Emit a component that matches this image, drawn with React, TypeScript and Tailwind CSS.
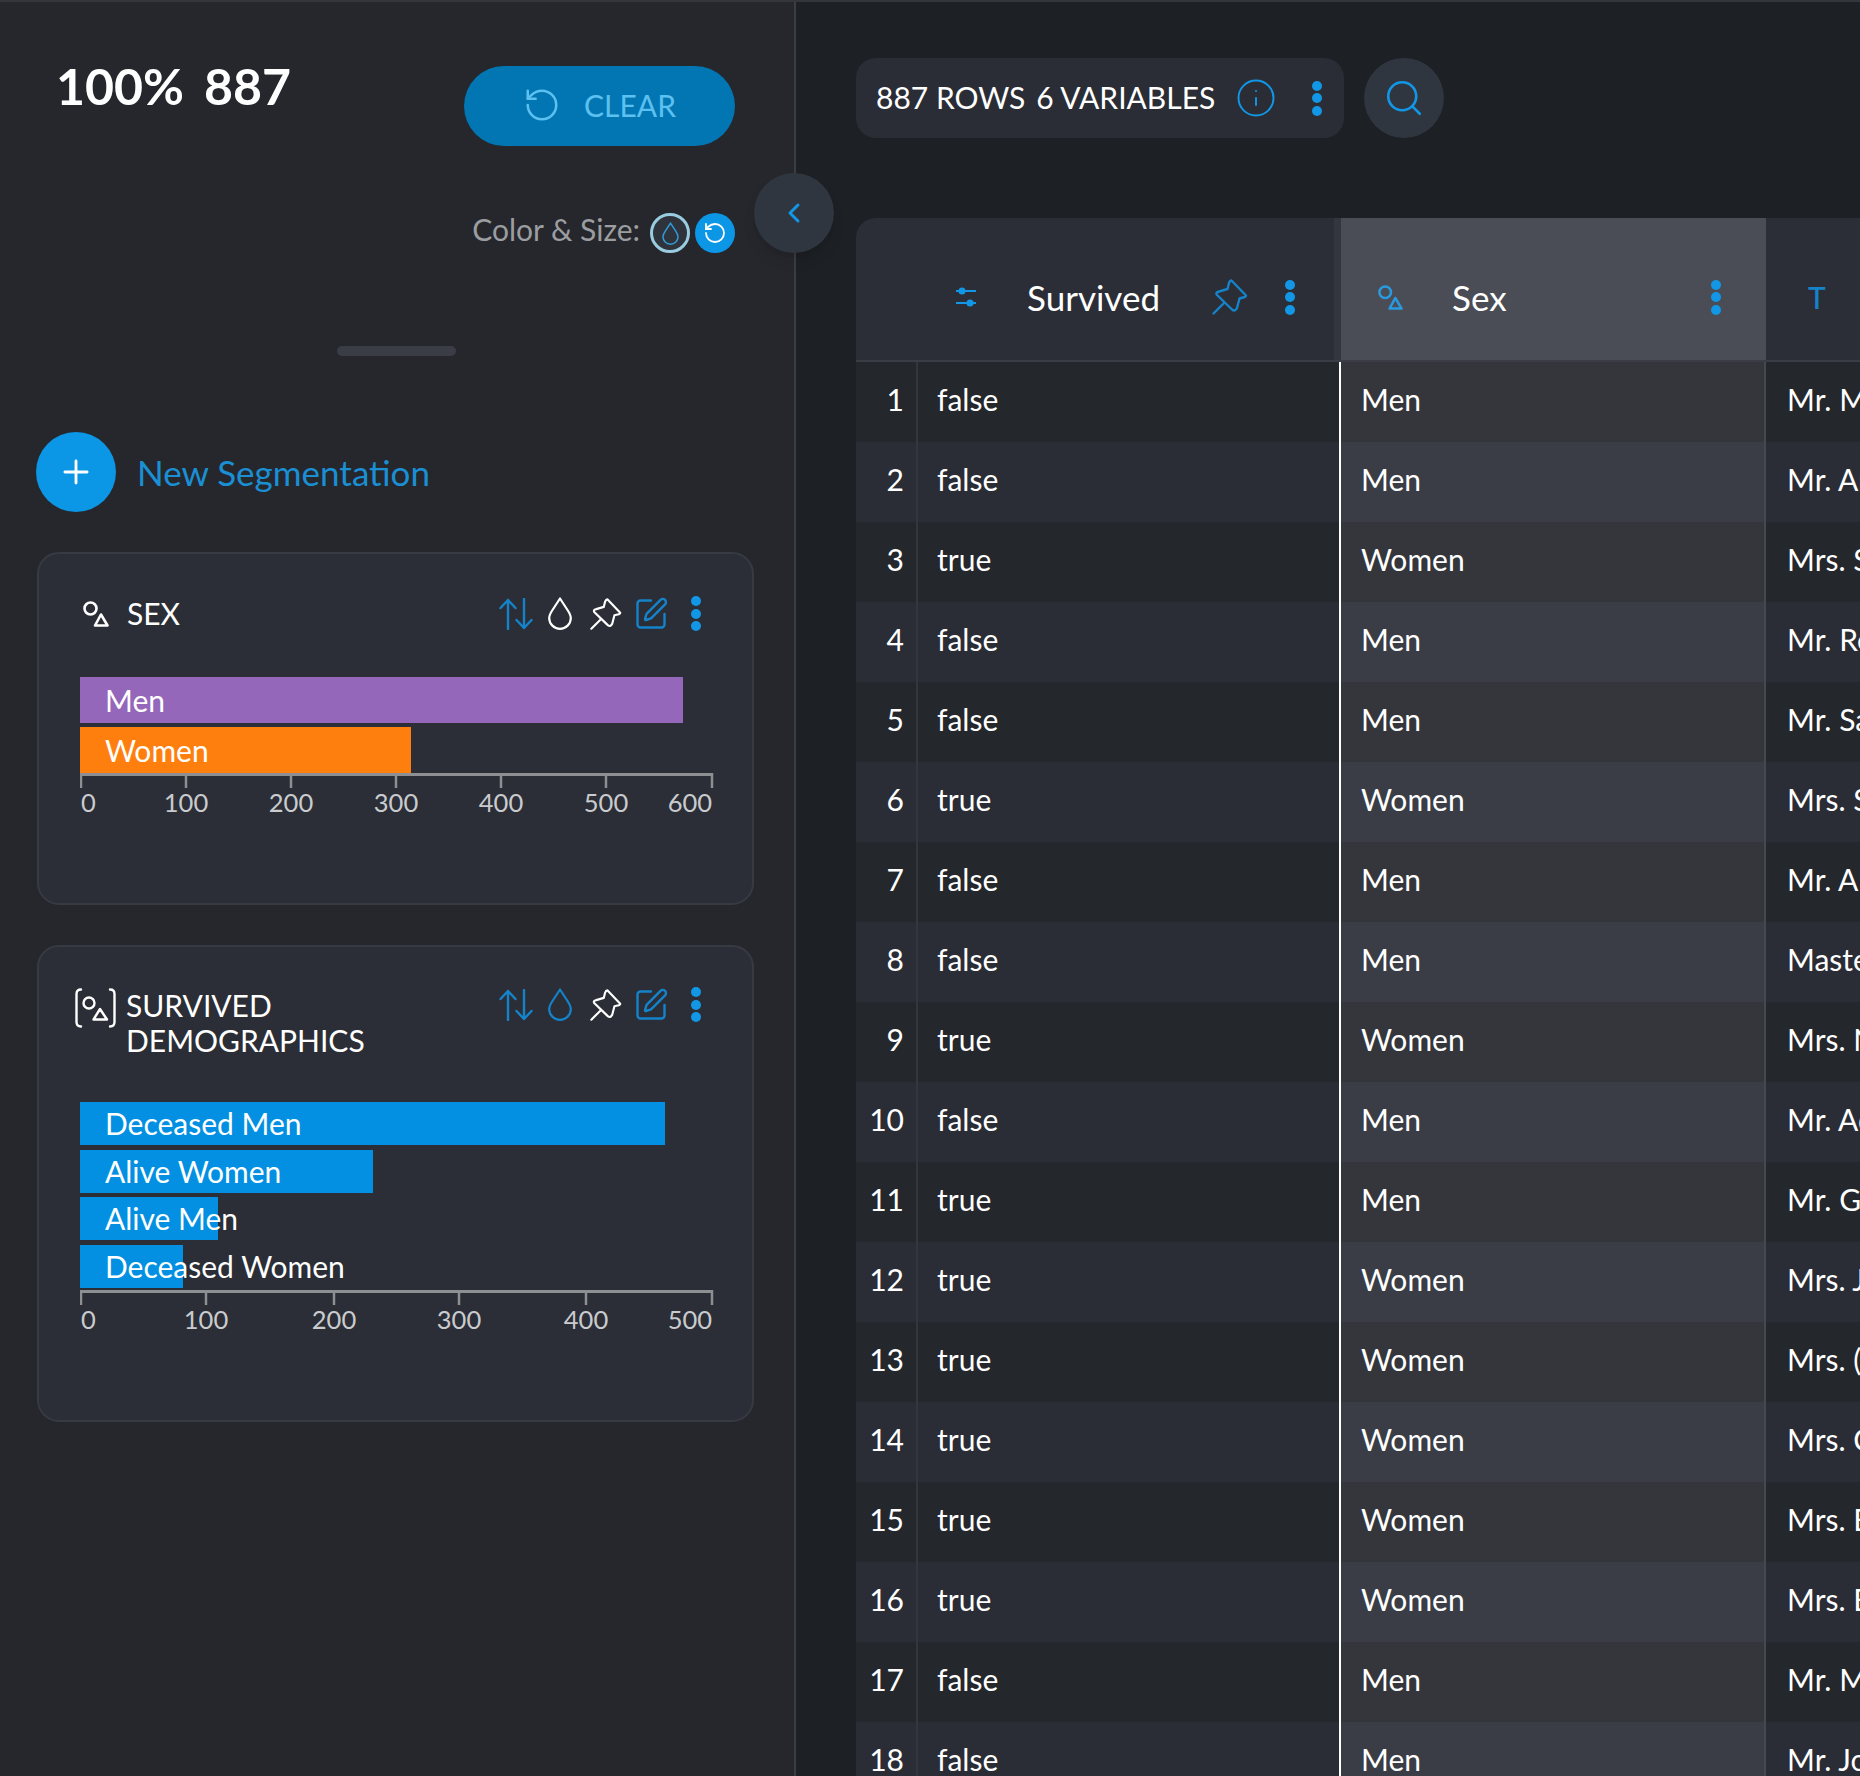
import React from 'react';
import { ChevronLeft, Info, Plus, RotateCcw, Search, SquarePen } from 'lucide-react';

interface Row {
  survived: string;
  sex: string;
  name: string;
}

const rows: Row[] = [
  { survived: 'false', sex: 'Men', name: 'Mr. Mark' },
  { survived: 'false', sex: 'Men', name: 'Mr. Anders' },
  { survived: 'true', sex: 'Women', name: 'Mrs. Sara' },
  { survived: 'false', sex: 'Men', name: 'Mr. Rene' },
  { survived: 'false', sex: 'Men', name: 'Mr. Samuel' },
  { survived: 'true', sex: 'Women', name: 'Mrs. Sinai' },
  { survived: 'false', sex: 'Men', name: 'Mr. Albert' },
  { survived: 'false', sex: 'Men', name: 'Master Harald' },
  { survived: 'true', sex: 'Women', name: 'Mrs. Nora' },
  { survived: 'false', sex: 'Men', name: 'Mr. Adolph' },
  { survived: 'true', sex: 'Men', name: 'Mr. George' },
  { survived: 'true', sex: 'Women', name: 'Mrs. John' },
  { survived: 'true', sex: 'Women', name: 'Mrs. (Alice' },
  { survived: 'true', sex: 'Women', name: 'Mrs. Carol' },
  { survived: 'true', sex: 'Women', name: 'Mrs. Edith' },
  { survived: 'true', sex: 'Women', name: 'Mrs. Emily' },
  { survived: 'false', sex: 'Men', name: 'Mr. Mauritz' },
  { survived: 'false', sex: 'Men', name: 'Mr. Johan' },
];

const Dots = ({ className = '' }: { className?: string }) => (
  <div className={`flex flex-col items-center justify-between w-[10px] h-[35px] ${className}`}>
    <span className="w-[10px] h-[10px] rounded-full bg-[#1297e6]" />
    <span className="w-[10px] h-[10px] rounded-full bg-[#1297e6]" />
    <span className="w-[10px] h-[10px] rounded-full bg-[#1297e6]" />
  </div>
);

const ShapesIcon = ({ className = '' }: { className?: string }) => (
  <svg viewBox="0 0 26 26" fill="none" stroke="currentColor" strokeWidth="2.6" className={className}>
    <circle cx="7.5" cy="7.5" r="6" />
    <path d="M18 13.5 L24.5 24.5 L12 24.5 Z" strokeLinejoin="round" />
  </svg>
);

const BracketShapesIcon = () => (
  <svg viewBox="0 0 41 40" fill="none" stroke="currentColor" strokeWidth="2.4" strokeLinecap="round" className="w-[41px] h-[40px] text-white">
    <path d="M6 1.5 Q1.5 1.5 1.5 6 L1.5 34 Q1.5 38.5 6 38.5" />
    <path d="M35 1.5 Q39.5 1.5 39.5 6 L39.5 34 Q39.5 38.5 35 38.5" />
    <circle cx="14" cy="15" r="5.5" />
    <path d="M25 21 L32 31.5 L18.5 31.5 Z" strokeLinejoin="round" />
  </svg>
);

const SortIcon = () => (
  <svg viewBox="0 0 34 32" fill="none" stroke="#1583c9" strokeWidth="2.4" strokeLinecap="round" strokeLinejoin="round" className="w-[34px] h-[32px]">
    <path d="M9 31 L9 2 M1.5 10 L9 2 L16.5 10" />
    <path d="M25 1 L25 30 M17.5 22 L25 30 L32.5 22" />
  </svg>
);

const DropIcon = ({ className = '' }: { className?: string }) => (
  <svg viewBox="0 0 24 33" fill="none" stroke="currentColor" strokeWidth="2.2" strokeLinejoin="round" className={className}>
    <path d="M12 1.5 L19.5 13 C21.5 16 22.8 18 22.8 21 A10.8 10.8 0 0 1 1.2 21 C1.2 18 2.5 16 4.5 13 Z" />
  </svg>
);

const PinIcon = ({ className = '' }: { className?: string }) => (
  <svg viewBox="0 0 36 36" fill="none" stroke="currentColor" strokeWidth="2.4" strokeLinecap="round" strokeLinejoin="round" className={className}>
    <path d="M1.5 34.5 L12.5 23.5" />
    <path d="M19.5 1.5 L34 16.5 Q34 18 31 18.5 L27.5 19.5 L25 29 Q23 33 20 30.5 L5 16 Q3 13.5 7 12.5 L15.5 10 L17 4 Q18 1.5 19.5 1.5 Z" />
  </svg>
);

const SlidersIcon = () => (
  <svg viewBox="0 0 20 20" fill="none" stroke="#1297e6" strokeWidth="2" className="w-[20px] h-[20px]">
    <path d="M0 4 L20 4 M0 16 L20 16" />
    <circle cx="6" cy="4" r="3.5" fill="#1297e6" stroke="none" />
    <circle cx="14" cy="16" r="3.5" fill="#1297e6" stroke="none" />
  </svg>
);

const CardActions = ({ dropClass }: { dropClass: string }) => (
  <div className="flex items-center h-[33px]">
    <SortIcon />
    <DropIcon className={`w-[24px] h-[33px] ml-[15px] ${dropClass}`} />
    <PinIcon className="w-[32px] h-[32px] ml-[18px] text-white" />
    <SquarePen className="w-[36px] h-[36px] ml-[11px] text-[#1583c9]" strokeWidth={1.6} />
    <Dots className="ml-[22px]" />
  </div>
);

const Axis = ({ ticks, labels }: { ticks: number[]; labels: string[] }) => (
  <svg width="634" height="46" className="block font-['Lato',sans-serif]">
    <path d="M1 1.5 L632 1.5" stroke="#8d8f93" strokeWidth="3" />
    {ticks.map((t) => (
      <path key={t} d={`M${t} 0 L${t} 15`} stroke="#8d8f93" strokeWidth="2.5" />
    ))}
    {labels.map((label, i) => (
      <text
        key={label}
        x={ticks[i]}
        y="39"
        fontSize="25.5"
        fill="#c9cbce"
        textAnchor={i === 0 ? 'start' : i === labels.length - 1 ? 'end' : 'middle'}
      >
        {label}
      </text>
    ))}
  </svg>
);

const Bar = ({ label, widthClass, colorClass, heightClass }: { label: string; widthClass: string; colorClass: string; heightClass: string }) => (
  <div className={`flex items-center pl-[25px] text-[30px] text-white whitespace-nowrap ${heightClass} ${widthClass} ${colorClass}`}>
    {label}
  </div>
);

const DataRow = ({ row, index }: { row: Row; index: number }) => {
  const even = index % 2 === 1;
  return (
    <div className={`flex h-[80px] shrink-0 items-center text-[30px] text-white ${even ? 'bg-[#2a2d35]' : 'bg-[#24272b]'}`}>
      <div className="w-[62px] h-full shrink-0 flex items-center justify-end pr-[12px] pb-[5px] border-r-2 border-[#33363e]">
        {index + 1}
      </div>
      <div className="w-[421px] h-full shrink-0 flex items-center pl-[19px] pb-[5px]">{row.survived}</div>
      <div className={`w-[427px] h-full shrink-0 flex items-center pl-[20px] pb-[5px] border-l-2 border-l-white border-r-2 border-r-[#45484f] ${even ? 'bg-[#3a3d45]' : 'bg-[#34363b]'}`}>
        {row.sex}
      </div>
      <div className="flex-1 h-full flex items-center pl-[21px] pb-[5px] whitespace-nowrap overflow-hidden">{row.name}</div>
    </div>
  );
};

export default function App() {
  return (
    <div className="relative flex w-[1860px] h-[1776px] overflow-hidden bg-[#1d2024] font-['Lato',sans-serif] border-t-2 border-[#33363c]">
      <aside className="w-[796px] h-full shrink-0 bg-[#25272c] border-r-2 border-[#3a3d44] px-[37px]">
        <div className="flex justify-between pt-[64px] pr-[22px]">
          <div className="flex gap-[20px] pl-[19px] -mt-[3px] h-[50px] text-[50px] leading-[46px] font-bold text-white">
            <span>100%</span>
            <span>887</span>
          </div>
          <button className="flex items-center justify-center gap-[23px] w-[271px] h-[80px] pb-[2px] rounded-full bg-[#0176b3] text-[#5cc0f0] text-[30px]">
            <RotateCcw className="w-[38px] h-[38px]" strokeWidth={1.6} />
            CLEAR
          </button>
        </div>

        <div className="flex items-center justify-end pt-[67px] pr-[22px] text-[30px] text-[#9b9da0]">
          <span className="mr-[10px] -mt-[8px]">Color &amp; Size:</span>
          <span className="flex items-center justify-center w-[40px] h-[40px] rounded-full border-[3px] border-[#9accdf] bg-[#2f333b] text-[#2f9bd8]">
            <DropIcon className="w-[17px] h-[23px]" />
          </span>
          <span className="flex items-center justify-center w-[40px] h-[40px] ml-[5px] rounded-full bg-[#0b96e6] text-white">
            <RotateCcw className="w-[24px] h-[24px]" strokeWidth={1.8} />
          </span>
        </div>

        <div className="flex justify-center pt-[93px] pr-[2px]">
          <div className="w-[119px] h-[10px] rounded-[5px] bg-[#3a3d45]" />
        </div>

        <div className="flex items-center gap-[21px] pt-[76px] -ml-[1px]">
          <span className="flex items-center justify-center w-[80px] h-[80px] rounded-full bg-[#0b96e6] text-white">
            <Plus className="w-[38px] h-[38px]" strokeWidth={1.8} />
          </span>
          <span className="text-[35px] text-[#1a8fd4]">New Segmentation</span>
        </div>

        <section className="mt-[40px] h-[353px] w-[717px] rounded-[22px] border-2 border-[#373a42] bg-[#2b2e36] pl-[41px]">
          <div className="flex items-center justify-between pt-[43px] pr-[51px] h-[76px]">
            <div className="flex items-center gap-[18px] ml-[3px] text-[30px] text-white">
              <ShapesIcon className="w-[26px] h-[26px] text-white" />
              SEX
            </div>
            <CardActions dropClass="text-white" />
          </div>
          <div className="pt-[47px]">
            <Bar label="Men" widthClass="w-[603px]" colorClass="bg-[#9467ba]" heightClass="h-[46px]" />
            <Bar label="Women" widthClass="w-[331px] mt-[4px]" colorClass="bg-[#ff7f0e]" heightClass="h-[46px]" />
            <Axis ticks={[1, 106, 211, 316, 421, 526, 632]} labels={['0', '100', '200', '300', '400', '500', '600']} />
          </div>
        </section>

        <section className="mt-[40px] h-[477px] w-[717px] rounded-[22px] border-2 border-[#373a42] bg-[#2b2e36] pl-[41px]">
          <div className="flex items-start justify-between pt-[41px] pr-[51px] h-[112px]">
            <div className="flex items-start gap-[10px] -ml-[5px] text-[30px] leading-[35px] text-white">
              <BracketShapesIcon />
              <span>SURVIVED<br />DEMOGRAPHICS</span>
            </div>
            <CardActions dropClass="text-[#1583c9]" />
          </div>
          <div className="pt-[43px]">
            <Bar label="Deceased Men" widthClass="w-[585px]" colorClass="bg-[#0390e2]" heightClass="h-[43px]" />
            <Bar label="Alive Women" widthClass="w-[293px] mt-[5px]" colorClass="bg-[#0390e2]" heightClass="h-[43px]" />
            <Bar label="Alive Men" widthClass="w-[138px] mt-[4px]" colorClass="bg-[#0390e2]" heightClass="h-[43px]" />
            <Bar label="Deceased Women" widthClass="w-[103px] mt-[5px]" colorClass="bg-[#0390e2]" heightClass="h-[43px]" />
            <div className="mt-[2px]">
              <Axis ticks={[1, 126, 254, 379, 506, 632]} labels={['0', '100', '200', '300', '400', '500']} />
            </div>
          </div>
        </section>
      </aside>

      <main className="flex-1 min-w-0 pl-[60px] pt-[56px] overflow-hidden">
        <div className="flex items-center gap-[20px]">
          <div className="flex items-center w-[488px] h-[80px] rounded-[20px] bg-[#2a2d35] pl-[20px] text-[30px] text-white whitespace-nowrap">
            <div className="flex gap-[11px] pb-[2px]">
              <span>887 ROWS</span>
              <span>6 VARIABLES</span>
            </div>
            <Info className="w-[42px] h-[42px] ml-[20px] text-[#1297e6]" strokeWidth={1.1} />
            <Dots className="ml-[35px]" />
          </div>
          <div className="flex items-center justify-center w-[80px] h-[80px] rounded-full bg-[#303640]">
            <Search className="w-[42px] h-[42px] text-[#1297e6]" strokeWidth={1.5} />
          </div>
        </div>

        <div className="mt-[80px] w-[1004px]">
          <div className="flex h-[144px] border-b-2 border-[#3a3d45] rounded-tl-[20px] bg-[#2b2e36] overflow-hidden">
            <div className="w-[478px] shrink-0 flex items-center pt-[16px] text-white">
              <div className="ml-[100px]"><SlidersIcon /></div>
              <span className="ml-[51px] text-[35px]">Survived</span>
              <PinIcon className="w-[36px] h-[36px] ml-[52px] text-[#1583c9]" />
              <Dots className="ml-[37px]" />
            </div>
            <div className="w-[7px] shrink-0 bg-[#33363e]" />
            <div className="w-[425px] shrink-0 flex items-center pt-[16px] bg-[#4a4d55] text-white">
              <ShapesIcon className="w-[25px] h-[25px] ml-[37px] text-[#2a9ae0]" />
              <span className="ml-[49px] text-[35px]">Sex</span>
              <Dots className="ml-[204px]" />
            </div>
            <div className="flex-1 flex items-center pt-[16px] pl-[42px] text-[30px] font-medium text-[#1583c9]">T</div>
          </div>
          {rows.map((row, i) => (
            <DataRow key={i} row={row} index={i} />
          ))}
        </div>
      </main>

      <button className="absolute left-[754px] top-[171px] flex items-center justify-center w-[80px] h-[80px] rounded-full bg-[#303640] shadow-lg text-[#1297e6]">
        <ChevronLeft className="w-[32px] h-[32px]" strokeWidth={2.2} />
      </button>
    </div>
  );
}
